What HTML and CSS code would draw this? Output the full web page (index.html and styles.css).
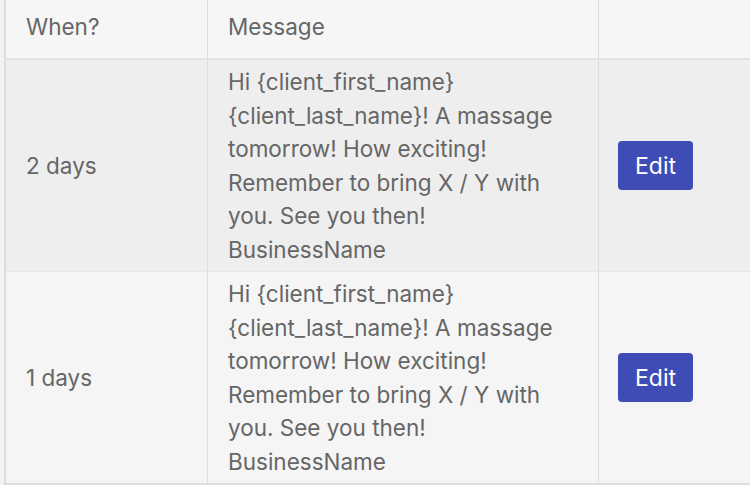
FILE: index.html
```html
<!DOCTYPE html>
<html lang="en">
<head>
    <meta charset="UTF-8">
    <title>Reminders</title>
    <link rel="stylesheet" href="styles.css">
</head>
<body>
    <table class="reminders">
        <thead>
            <tr>
                <th class="col-when">When?</th>
                <th class="col-message">Message</th>
                <th class="col-action"></th>
            </tr>
        </thead>
        <tbody>
            <tr class="row-odd">
                <td>2 days</td>
                <td class="message">Hi {client_first_name} {client_last_name}! A massage tomorrow! How exciting! Remember to bring X / Y with you. See you then! BusinessName</td>
                <td><button class="edit-btn">Edit</button></td>
            </tr>
            <tr class="row-even">
                <td>1 days</td>
                <td class="message">Hi {client_first_name} {client_last_name}! A massage tomorrow! How exciting! Remember to bring X / Y with you. See you then! BusinessName</td>
                <td><button class="edit-btn">Edit</button></td>
            </tr>
        </tbody>
    </table>
</body>
</html>
```

FILE: styles.css
```css
body {
    margin: 0;
    background-color: #f3f3f3;
    font-family: Inter, "Liberation Sans", sans-serif;
    overflow: hidden;
}

.reminders {
    border-collapse: collapse;
    margin-left: 4px;
    width: 820px;
    table-layout: fixed;
    color: #666;
    font-size: 22.5px;
    border-left: 2px solid #dddddd;
    border-bottom: 2px solid #dddddd;
}

.reminders th,
.reminders td {
    border-right: 1px solid #dddddd;
    padding: 5px 22px 5px 20px;
    text-align: left;
    vertical-align: middle;
    line-height: 33.5px;
}

.reminders th {
    background-color: #f6f6f6;
    font-weight: normal;
    height: 53px;
    padding-top: 0;
    padding-bottom: 5px;
    border-bottom: 2px solid #e2e2e2;
}

.col-when { width: 159px; }
.col-message { width: 348px; }

.row-odd td { background-color: #eeeeee; }
.row-even td { background-color: #f5f5f5; }

.row-odd td { border-bottom: 1px solid #e6e6e6; }

.edit-btn {
    background-color: #3f4cb6;
    color: #fff;
    border: none;
    border-radius: 4px;
    font-family: inherit;
    font-size: 23px;
    padding: 0;
    height: 49px;
    width: 75px;
    margin-left: -1px;
}
```
